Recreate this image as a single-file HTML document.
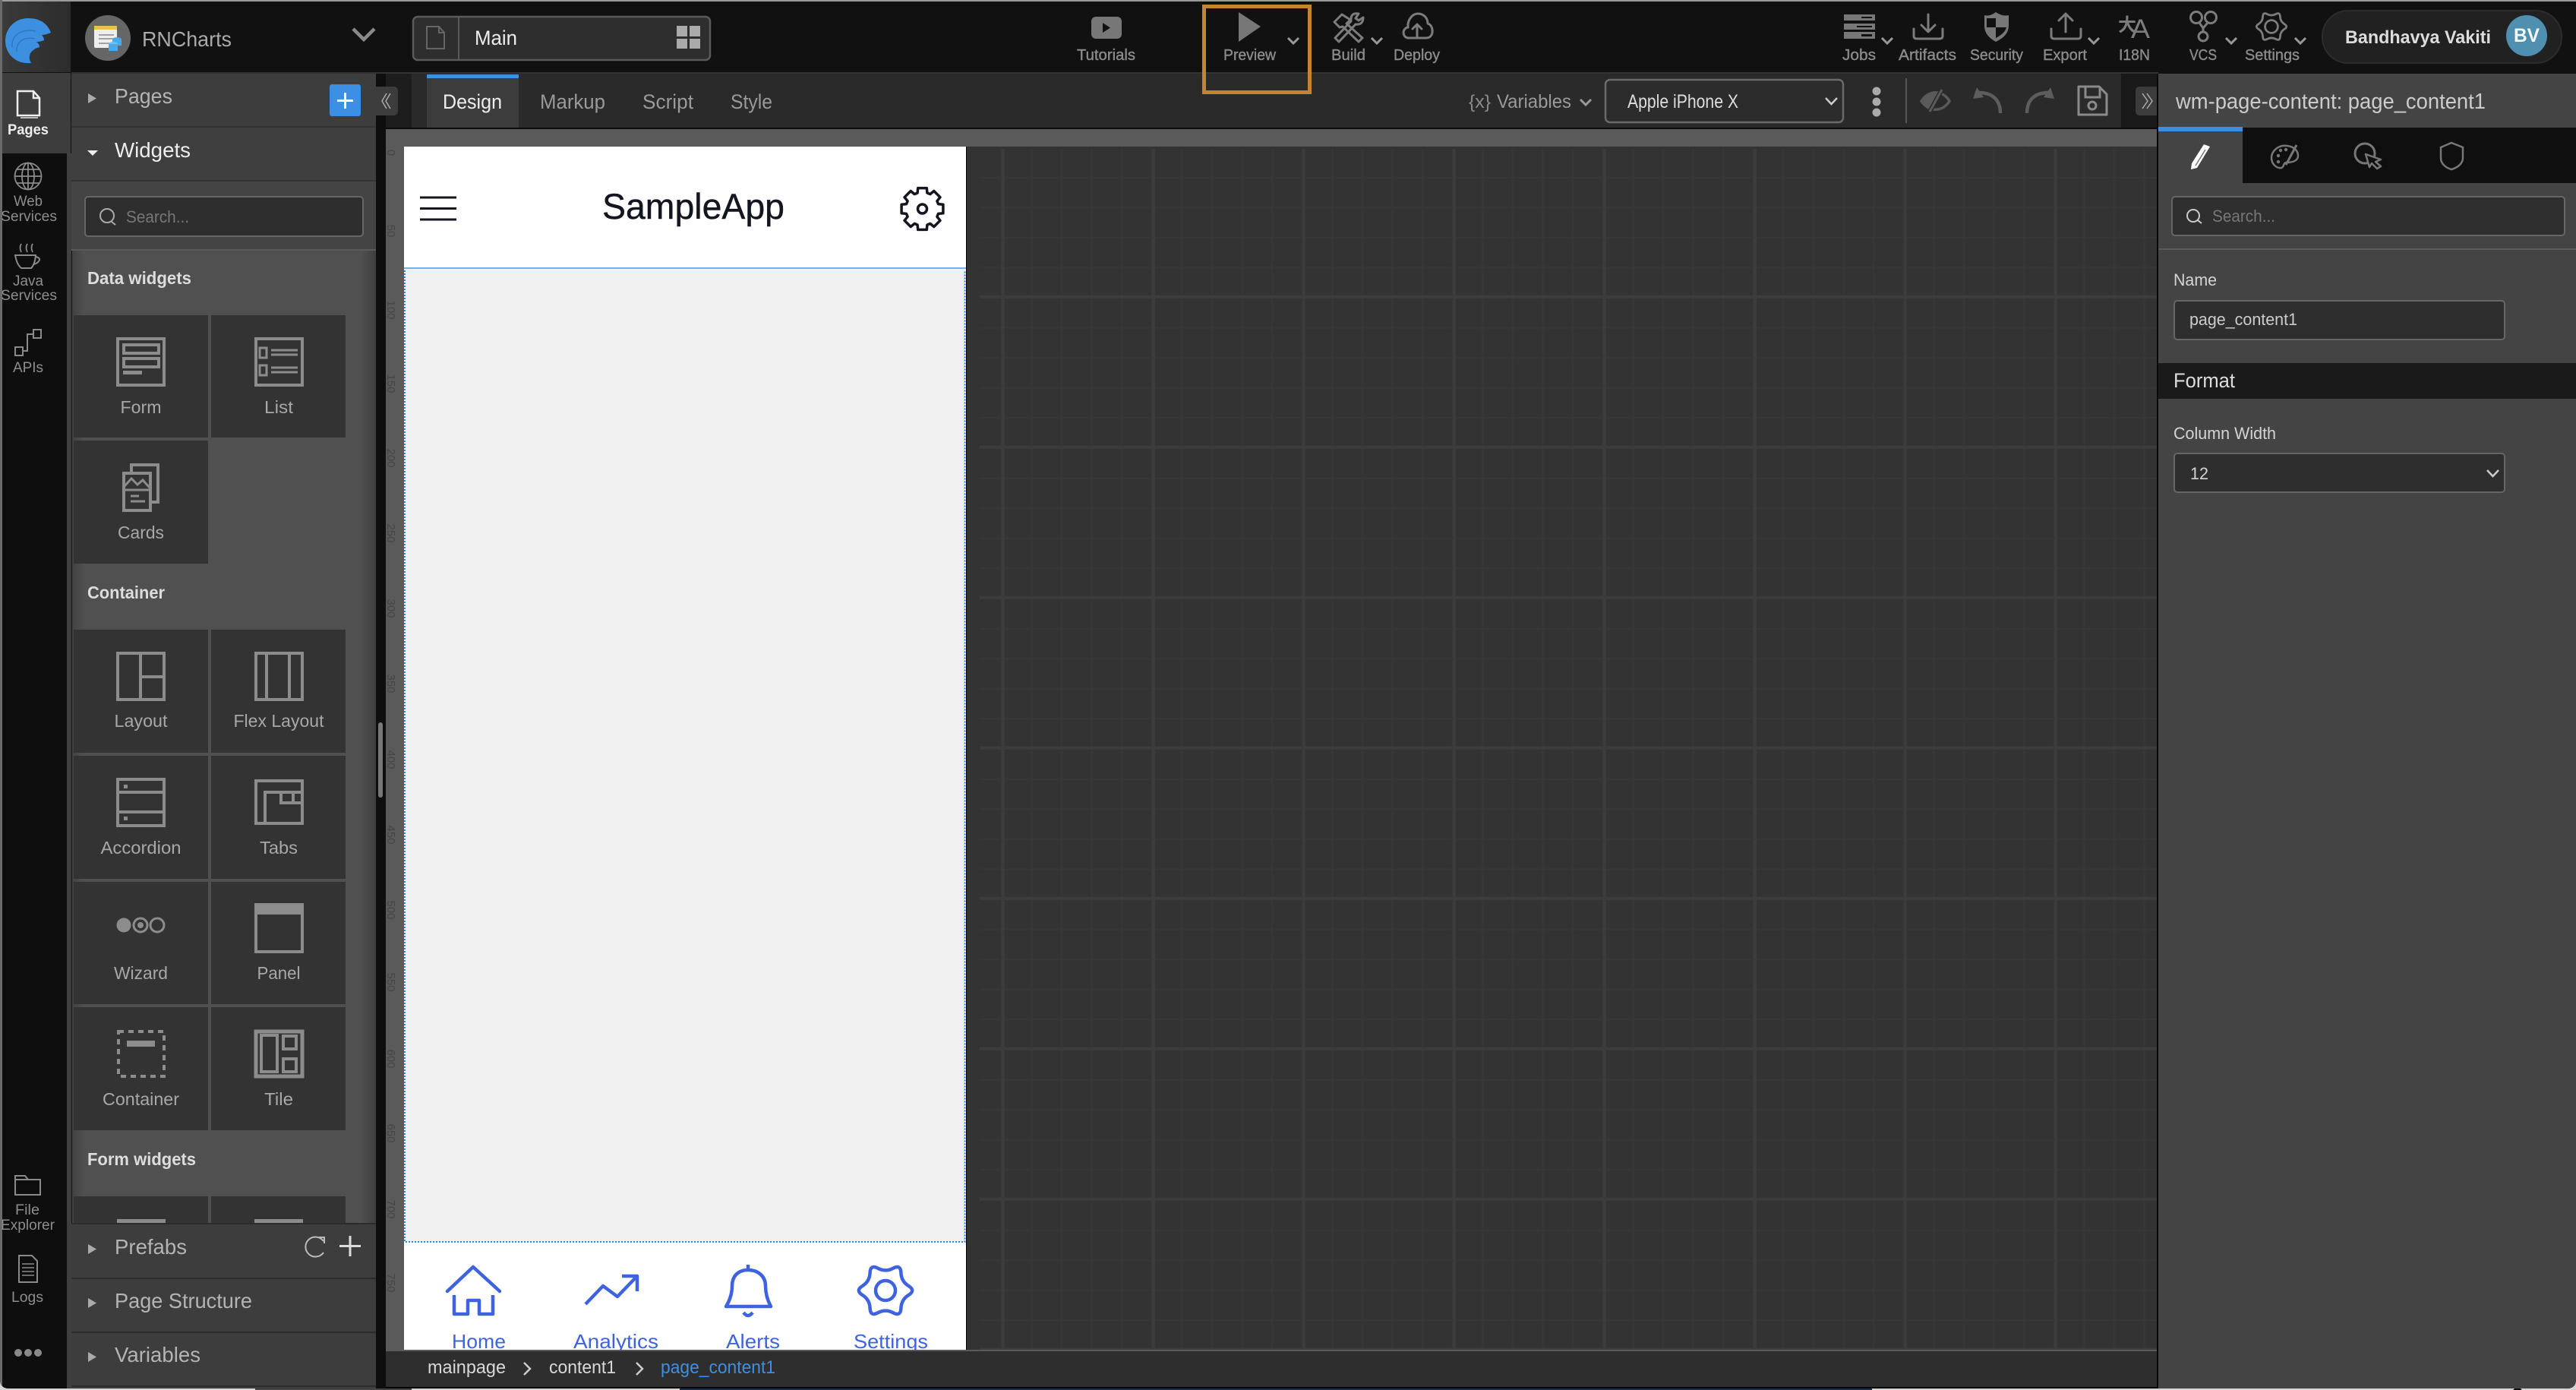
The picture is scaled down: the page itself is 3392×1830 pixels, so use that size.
<!DOCTYPE html>
<html lang="en"><head><meta charset="utf-8"><title>RNCharts - Studio</title>
<style>
html,body{margin:0;padding:0;width:3392px;height:1830px;overflow:hidden;background:#cfcfcf}
svg{display:block}
text{font-family:"Liberation Sans","Noto Sans CJK SC",sans-serif}
.tb{font-size:20px;fill:#8a8a8a;stroke:#8a8a8a;stroke-width:.4px}
.rl{font-size:19px;fill:#8d8d8d}
.tl{font-size:23px;fill:#a8a8a8}
.sec{font-size:23px;fill:#ddd;font-weight:bold}
.hd{font-size:28px;fill:#b4b4b4}
.nav{font-size:26px;fill:#3f63e0}
.rul{font-size:15px;fill:#454545}
.fp{font-size:22px;fill:#d4d4d4}
.ti{fill:none;stroke:#8c8c8c;stroke-width:4}
.tf{fill:#8c8c8c}
.ic{fill:none;stroke:#7c7c7c;stroke-width:3;stroke-linejoin:round;stroke-linecap:round}
.ch{fill:none;stroke:#999;stroke-width:3}
.ni{fill:none;stroke:#3f63e0;stroke-width:4.5;stroke-linejoin:round}
</style></head><body>
<svg xmlns="http://www.w3.org/2000/svg" width="3392" height="1830" viewBox="0 0 3392 1830">
<defs>
<pattern id="gm" patternUnits="userSpaceOnUse" x="1278.1" y="232.6" width="39.6" height="39.6"><path d="M1 0V39.6M0 1H39.6" stroke="#373737" stroke-width="2" fill="none"/></pattern>
<pattern id="gM" patternUnits="userSpaceOnUse" x="1318.7" y="388.7" width="198" height="198"><path d="M2 0V198M0 2H198" stroke="#3c3c3c" stroke-width="4" fill="none"/></pattern>
<linearGradient id="secg" x1="0" x2="1" y1="0" y2="0"><stop offset="0" stop-color="#424242"/><stop offset=".04" stop-color="#505050"/><stop offset=".95" stop-color="#505050"/><stop offset="1" stop-color="#3e3e3e"/></linearGradient>
<linearGradient id="logoc" x1="0" x2="1" y1="0" y2="0"><stop offset="0" stop-color="#3a3a3a"/><stop offset="1" stop-color="#2c2c2c"/></linearGradient>
<clipPath id="phone"><rect x="532" y="193" width="741" height="1584"/></clipPath>
<clipPath id="win"><path d="M0 0H3392V1816Q3392 1828 3380 1828H12Q0 1828 0 1816Z"/></clipPath>
</defs>

<!-- bottom strip behind window -->
<rect width="3392" height="1830" fill="#d4d4d4"/>
<rect x="895" y="1826" width="1570" height="4" fill="#1d2d4e"/>
<rect x="336" y="1828" width="206" height="2" fill="#444"/>
<circle cx="3315" cy="1834" r="7" fill="#111"/>

<g clip-path="url(#win)">
<rect width="3392" height="1830" fill="#111"/>
<rect width="3392" height="2" fill="#9a9a9a"/>

<!-- rail -->
<rect x="0" y="0" width="3" height="1830" fill="#6a6a6a"/>
<rect x="3" y="2" width="90" height="93" fill="url(#logoc)"/>
<rect x="3" y="96" width="85" height="1732" fill="#0e0e0e"/>
<rect x="3" y="96" width="90" height="106" fill="#3d3d3d"/>
<rect x="88" y="202" width="6" height="1626" fill="#3f3f3f"/>
<!-- logo -->
<path d="M37 24C54 24 63 32 67 43Q60 46 55 46Q58 49 58 53Q54 55 48 55Q52 58 52 62Q44 64 40 70Q37 77 41 83C20 85 7 70 7 54C7 37 20 24 37 24Z" fill="#3d8fe0"/>
<path d="M16 62C15 45 28 38 47 41M22 68C22 55 30 48 46 51" fill="none" stroke="#2f78c2" stroke-width="1.5"/>
<!-- project -->
<circle cx="142" cy="50" r="30" fill="#666"/>
<rect x="124" y="34" width="30" height="29" rx="2" fill="#eee"/><rect x="124" y="34" width="30" height="5" fill="#e8c24a"/>
<path d="M130 46H150M130 51H150M130 57H146" stroke="#8a8a8a" stroke-width="1.5"/>
<ellipse cx="154" cy="52" rx="6" ry="3" fill="#4aa9e8"/><rect x="148" y="52" width="12" height="8" fill="#4aa9e8"/>
<ellipse cx="149" cy="58" rx="6" ry="3" fill="#6cc0f4"/><rect x="143" y="58" width="12" height="9" fill="#4aa9e8"/>
<text x="187" y="61" font-size="28" fill="#aaa" textLength="118" lengthAdjust="spacingAndGlyphs">RNCharts</text>
<path d="M465 38L479 52L493 38" fill="none" stroke="#8a8a8a" stroke-width="4.5"/>
<!-- page select -->
<rect x="544" y="22" width="391" height="57" rx="6" fill="#2e2e2e" stroke="#5a5a5a" stroke-width="2.5"/>
<path d="M604 22V79" stroke="#5a5a5a" stroke-width="2"/>
<path d="M562 35H578L585 43V64H562Z M578 35V43H585" fill="none" stroke="#666" stroke-width="2"/>
<text x="625" y="59" font-size="27" fill="#eee" textLength="56" lengthAdjust="spacingAndGlyphs">Main</text>
<path d="M891 34h14v14h-14zM908 34h14v14h-14zM891 51h14v13h-14zM908 51h14v13h-14z" fill="#aaa"/>

<!-- top right tools -->
<rect x="1437" y="22" width="40" height="29" rx="6" fill="#777"/><path d="M1452 30L1462 36.5L1452 43Z" fill="#111"/>
<text class="tb" x="1418" y="79" textLength="77" lengthAdjust="spacingAndGlyphs">Tutorials</text>
<path d="M1631 16L1660 35L1631 55Z" fill="#777"/>
<text class="tb" x="1611" y="79" textLength="69" lengthAdjust="spacingAndGlyphs">Preview</text>
<path class="ch" d="M1696 50L1703 57L1710 50"/>
<path class="ic" d="M1757 29L1767 19L1778 26L1773 31L1794 50L1789 55L1768 35L1764 36Z"/>
<path class="ic" d="M1758 50L1763 55L1785 32Q1795 33 1795 23L1789 27L1785 24L1789 18Q1778 16 1779 28Z"/>
<path class="ch" d="M1806 50L1813 57L1820 50"/>
<text class="tb" x="1753" y="79" textLength="45" lengthAdjust="spacingAndGlyphs">Build</text>
<path class="ic" d="M1855 50C1846 50 1846 37 1854 36C1853 26 1860 18 1867 18C1875 18 1880 24 1880 31C1888 33 1889 50 1878 50Z M1866 50V33M1860 38L1866 32L1872 38"/>
<text class="tb" x="1835" y="79" textLength="61" lengthAdjust="spacingAndGlyphs">Deploy</text>

<path d="M2428 19h41v8h-41zM2428 31h41v8h-41zM2428 42h41v9h-41z" fill="#777"/>
<path d="M2451 22h14v2h-14zM2445 34h20v2h-20zM2451 45h14v3h-14z" fill="#111"/>
<path class="ch" d="M2478 50L2485 57L2492 50"/>
<text class="tb" x="2426" y="79" textLength="44" lengthAdjust="spacingAndGlyphs">Jobs</text>
<path class="ic" d="M2539 19V41M2530 33L2539 42L2548 33M2520 38V47Q2520 51 2524 51H2554Q2558 51 2558 47V38"/>
<text class="tb" x="2500" y="79" textLength="76" lengthAdjust="spacingAndGlyphs">Artifacts</text>
<path d="M2613 20Q2620 22 2628 16Q2637 22 2645 20V34Q2645 47 2628 55Q2613 47 2613 34Z" fill="#777"/>
<path d="M2616 24H2628V36H2616ZM2628 36H2642Q2640 44 2628 50Z" fill="#111"/>
<text class="tb" x="2594" y="79" textLength="70" lengthAdjust="spacingAndGlyphs">Security</text>
<path class="ic" d="M2720 19V42M2711 27L2720 18L2729 27M2701 38V47Q2701 51 2705 51H2736Q2740 51 2740 47V38"/>
<path class="ch" d="M2750 50L2757 57L2764 50"/>
<text class="tb" x="2690" y="79" textLength="58" lengthAdjust="spacingAndGlyphs">Export</text>
<text x="2789" y="41" font-size="24" fill="#7c7c7c" font-weight="bold">大</text>
<text x="2806" y="50" font-size="35" fill="#7c7c7c" textLength="25" lengthAdjust="spacingAndGlyphs">A</text>
<text class="tb" x="2790" y="79" textLength="41" lengthAdjust="spacingAndGlyphs">I18N</text>
<circle class="ic" cx="2892" cy="23" r="7.5"/><circle class="ic" cx="2911" cy="23" r="7.5"/><circle class="ic" cx="2901" cy="48" r="6"/>
<path class="ic" d="M2896 30L2901 37L2907 30M2901 37V42"/>
<path class="ch" d="M2931 50L2938 57L2945 50"/>
<text class="tb" x="2883" y="79" textLength="36" lengthAdjust="spacingAndGlyphs">VCS</text>
<g transform="translate(2991 35) scale(.56)"><path d="M30.4 6Q40 0 30.4 -6Q20.8 -12 20.4 -23.3Q20 -34.6 10 -29.3Q0 -24 -10 -29.3Q-20 -34.6 -20.4 -23.3Q-20.8 -12 -30.4 -6Q-40 0 -30.4 6Q-20.8 12 -20.4 23.3Q-20 34.6 -10 29.3Q0 24 10 29.3Q20 34.6 20.4 23.3Q20.8 12 30.4 6Z" fill="none" stroke="#7c7c7c" stroke-width="5"/><circle r="15" fill="none" stroke="#7c7c7c" stroke-width="5"/></g>
<path class="ch" d="M3022 50L3029 57L3036 50"/>
<text class="tb" x="2956" y="79" textLength="72" lengthAdjust="spacingAndGlyphs">Settings</text>
<rect x="3058" y="14" width="315" height="69" rx="34" fill="#212121" stroke="#2c2c2c" stroke-width="2"/>
<text x="3088" y="57" font-size="24" font-weight="bold" fill="#ddd" textLength="192" lengthAdjust="spacingAndGlyphs">Bandhavya Vakiti</text>
<circle cx="3327" cy="47" r="27" fill="#4f8fb0"/>
<text x="3310" y="55" font-size="25" font-weight="bold" fill="#f4f8fa" textLength="34" lengthAdjust="spacingAndGlyphs">BV</text>

<!-- second row / tabs -->
<rect x="94" y="95" width="2748" height="2" fill="#333"/>
<rect x="495" y="97" width="13" height="1731" fill="#0e0e0e"/>
<rect x="508" y="97" width="2285" height="71" fill="#2a2a2a"/>
<rect x="508" y="97" width="34" height="71" fill="#1d1d1d"/>
<rect x="2793" y="97" width="49" height="71" fill="#191919"/>
<rect x="562" y="103" width="121" height="65" fill="#3c3c3c"/><rect x="562" y="98" width="121" height="5" fill="#3d8fe0"/>
<text x="583" y="143" font-size="27" fill="#eee" textLength="78" lengthAdjust="spacingAndGlyphs">Design</text>
<text x="711" y="143" font-size="27" fill="#9a9a9a" textLength="86" lengthAdjust="spacingAndGlyphs">Markup</text>
<text x="846" y="143" font-size="27" fill="#9a9a9a" textLength="67" lengthAdjust="spacingAndGlyphs">Script</text>
<text x="962" y="143" font-size="27" fill="#9a9a9a" textLength="55" lengthAdjust="spacingAndGlyphs">Style</text>
<path d="M495 114H518Q524 114 524 120V146Q524 152 518 152H495Z" fill="#3c3c3c"/>
<path d="M509 123L503 133L509 143M514 123L508 133L514 143" fill="none" stroke="#aaa" stroke-width="1.5"/>

<text x="1934" y="142" font-size="24" fill="#8a8a8a" textLength="29" lengthAdjust="spacingAndGlyphs">{x}</text>
<text x="1971" y="142" font-size="25" fill="#9a9a9a" textLength="98" lengthAdjust="spacingAndGlyphs">Variables</text>
<path class="ch" d="M2081 131L2088 138L2095 131"/>
<rect x="2114" y="105" width="313" height="56" rx="6" fill="#2c2c2c" stroke="#6a6a6a" stroke-width="2.5"/>
<text x="2143" y="142" font-size="25" fill="#ddd" textLength="146" lengthAdjust="spacingAndGlyphs">Apple iPhone X</text>
<path d="M2404 129L2411.5 137L2419 129" fill="none" stroke="#ccc" stroke-width="2.5"/>
<circle cx="2471" cy="120" r="5.5" fill="#aaa"/><circle cx="2471" cy="134" r="5.5" fill="#aaa"/><circle cx="2471" cy="148" r="5.5" fill="#aaa"/>
<rect x="2509" y="103" width="2" height="59" fill="#555"/>
<path d="M2530 133C2540 118 2558 118 2567 133C2558 148 2540 148 2530 133Z" fill="none" stroke="#5a5a5a" stroke-width="3.5"/>
<path d="M2530 133C2536 124 2544 121 2552 121L2541 145C2537 143 2533 138 2530 133Z" fill="#5a5a5a"/>
<path d="M2557 118L2541 147" stroke="#2a2a2a" stroke-width="6"/>
<path d="M2557 118L2541 147" stroke="#5a5a5a" stroke-width="3"/>
<path d="M2634 149C2634 132 2624 122 2606 122" fill="none" stroke="#5d5d5d" stroke-width="4.5"/>
<path d="M2603 115L2598 130L2612 128Z" fill="#5d5d5d"/>
<path d="M2669 149C2669 132 2679 122 2697 122" fill="none" stroke="#5d5d5d" stroke-width="4.5"/>
<path d="M2700 115L2705 130L2691 128Z" fill="#5d5d5d"/>
<path d="M2737 114H2764L2774 124V151H2737Z" fill="none" stroke="#8a8a8a" stroke-width="3" stroke-linejoin="round"/>
<path d="M2746 114V128H2765V114" fill="none" stroke="#8a8a8a" stroke-width="3"/>
<circle cx="2755" cy="139" r="5" fill="none" stroke="#8a8a8a" stroke-width="3"/>
<path d="M2842 114H2818Q2812 114 2812 120V146Q2812 152 2818 152H2842Z" fill="#3c3c3c"/>
<path d="M2821 123L2828 133L2821 143M2827 123L2834 133L2827 143" fill="none" stroke="#aaa" stroke-width="1.5"/>

<!-- canvas -->
<rect x="508" y="168" width="2334" height="2" fill="#0a0a0a"/>
<rect x="508" y="170" width="2332" height="23" fill="#5a5a5a"/>
<rect x="508" y="170" width="24" height="1608" fill="#5a5a5a"/>
<rect x="1273" y="193" width="1567" height="1585" fill="#333"/>
<rect x="1290" y="196" width="1550" height="1582" fill="url(#gm)"/>
<rect x="1290" y="196" width="1550" height="1582" fill="url(#gM)"/>
<rect x="2840" y="97" width="2" height="1731" fill="#0a0a0a"/>
<g>
<text class="rul" text-anchor="middle" transform="translate(510 201) rotate(90)">0</text>
<text class="rul" text-anchor="middle" transform="translate(510 304) rotate(90)">50</text>
<text class="rul" text-anchor="middle" transform="translate(510 408) rotate(90)">100</text>
<text class="rul" text-anchor="middle" transform="translate(510 505) rotate(90)">150</text>
<text class="rul" text-anchor="middle" transform="translate(510 603) rotate(90)">200</text>
<text class="rul" text-anchor="middle" transform="translate(510 702) rotate(90)">250</text>
<text class="rul" text-anchor="middle" transform="translate(510 801) rotate(90)">300</text>
<text class="rul" text-anchor="middle" transform="translate(510 900) rotate(90)">350</text>
<text class="rul" text-anchor="middle" transform="translate(510 1000) rotate(90)">400</text>
<text class="rul" text-anchor="middle" transform="translate(510 1099) rotate(90)">450</text>
<text class="rul" text-anchor="middle" transform="translate(510 1198) rotate(90)">500</text>
<text class="rul" text-anchor="middle" transform="translate(510 1293) rotate(90)">550</text>
<text class="rul" text-anchor="middle" transform="translate(510 1394) rotate(90)">600</text>
<text class="rul" text-anchor="middle" transform="translate(510 1492) rotate(90)">650</text>
<text class="rul" text-anchor="middle" transform="translate(510 1592) rotate(90)">700</text>
<text class="rul" text-anchor="middle" transform="translate(510 1689) rotate(90)">750</text>
</g>

<!-- phone -->
<g clip-path="url(#phone)">
<rect x="532" y="193" width="741" height="1584" fill="#fff"/>
<rect x="532" y="354" width="740" height="1281" fill="#f0f0f0"/>
<rect x="532" y="352" width="740" height="2" fill="#6fb2ee"/>
<path d="M533 356V1635H1270.5V356" fill="none" stroke="#2a86e2" stroke-width="2" stroke-dasharray="2 2"/>
<rect x="1272" y="193" width="1" height="1584" fill="#000"/>
<path d="M553 260H601M553 274.5H601M553 289H601" stroke="#15151f" stroke-width="3"/>
<text x="793" y="288" font-size="47" fill="#15151f" stroke="#15151f" stroke-width=".4" textLength="240" lengthAdjust="spacingAndGlyphs">SampleApp</text>
<g transform="translate(1214.5 275)"><path d="M-6.4 -21L-5.8 -27.4L5.8 -27.4L6.4 -21L10.3 -19.4L15.3 -23.5L23.5 -15.3L19.4 -10.3L21 -6.4L27.4 -5.8L27.4 5.8L21 6.4L19.4 10.3L23.5 15.3L15.3 23.5L10.3 19.4L6.4 21L5.8 27.4L-5.8 27.4L-6.4 21L-10.3 19.4L-15.3 23.5L-23.5 15.3L-19.4 10.3L-21 6.4L-27.4 5.8L-27.4 -5.8L-21 -6.4L-19.4 -10.3L-23.5 -15.3L-15.3 -23.5L-10.3 -19.4Z" fill="none" stroke="#15151f" stroke-width="3.5" stroke-linejoin="round"/><circle r="6" fill="none" stroke="#15151f" stroke-width="3.5"/></g>
<!-- nav -->
<path class="ni" d="M589 1700L623 1668L658 1700" stroke-linecap="round"/>
<path class="ni" d="M598 1705V1730H616V1712H631V1730H649V1705"/>
<path class="ni" d="M771 1717L794 1693L813 1707L839 1680M819 1680H839V1700"/>
<path class="ni" d="M956 1720Q964 1707 964 1693C964 1680 972 1672 985 1672C998 1672 1008 1680 1008 1693Q1008 1707 1015 1720ZM985 1672V1665M979 1728Q985 1736 991 1728"/>
<g transform="translate(1166 1699)"><path class="ni" d="M30.4 6Q40 0 30.4 -6Q20.8 -12 20.4 -23.3Q20 -34.6 10 -29.3Q0 -24 -10 -29.3Q-20 -34.6 -20.4 -23.3Q-20.8 -12 -30.4 -6Q-40 0 -30.4 6Q-20.8 12 -20.4 23.3Q-20 34.6 -10 29.3Q0 24 10 29.3Q20 34.6 20.4 23.3Q20.8 12 30.4 6Z"/><circle class="ni" r="13"/></g>
<text class="nav" x="595" y="1775" textLength="71" lengthAdjust="spacingAndGlyphs">Home</text>
<text class="nav" x="755" y="1775" textLength="112" lengthAdjust="spacingAndGlyphs">Analytics</text>
<text class="nav" x="956" y="1775" textLength="71" lengthAdjust="spacingAndGlyphs">Alerts</text>
<text class="nav" x="1124" y="1775" textLength="98" lengthAdjust="spacingAndGlyphs">Settings</text>
</g>
<!-- breadcrumb -->
<rect x="508" y="1777" width="2332" height="2" fill="#5a5a5a"/>
<rect x="508" y="1779" width="2332" height="47" fill="#2e2e2e"/>
<rect x="508" y="1826" width="2334" height="2" fill="#050505"/>
<text x="563" y="1808" font-size="24" fill="#d8d8d8" textLength="103" lengthAdjust="spacingAndGlyphs">mainpage</text>
<path d="M690 1794L698 1802L690 1810" fill="none" stroke="#ccc" stroke-width="2.5"/>
<text x="723" y="1808" font-size="24" fill="#d8d8d8" textLength="88" lengthAdjust="spacingAndGlyphs">content1</text>
<path d="M838 1794L846 1802L838 1810" fill="none" stroke="#ccc" stroke-width="2.5"/>
<text x="870" y="1808" font-size="24" fill="#3f8ee0" textLength="151" lengthAdjust="spacingAndGlyphs">page_content1</text>

<!-- left panel -->
<rect x="94" y="97" width="401" height="70" fill="#3d3d3d"/><rect x="94" y="166" width="401" height="2" fill="#333"/>
<rect x="94" y="168" width="401" height="70" fill="#3f3f3f"/><rect x="94" y="237" width="401" height="2" fill="#333"/>
<rect x="94" y="239" width="401" height="89" fill="#444"/><rect x="94" y="328" width="401" height="2" fill="#5a5a5a"/>
<path d="M116 123L127 129.5L116 136Z" fill="#aaa"/>
<text class="hd" x="151" y="136" textLength="76" lengthAdjust="spacingAndGlyphs">Pages</text>
<rect x="434" y="111" width="41" height="42" rx="3" fill="#3d8fe3"/>
<path d="M454.5 122V143M444 132.5H465" stroke="#fff" stroke-width="3"/>
<path d="M115 198H129L122 205Z" fill="#eee"/>
<text class="hd" style="fill:#eee" x="151" y="207" textLength="100" lengthAdjust="spacingAndGlyphs">Widgets</text>
<rect x="112" y="259" width="366" height="52" rx="4" fill="#2e2e2e" stroke="#666" stroke-width="2"/>
<circle cx="141" cy="284" r="9" fill="none" stroke="#aaa" stroke-width="2"/><path d="M147 292L152 296" stroke="#aaa" stroke-width="2"/>
<text x="166" y="293" font-size="22" fill="#777" textLength="83" lengthAdjust="spacingAndGlyphs">Search...</text>

<rect x="95" y="330" width="400" height="1281" fill="url(#secg)"/>
<text class="sec" x="115" y="374" textLength="137" lengthAdjust="spacingAndGlyphs">Data widgets</text>
<text class="sec" x="115" y="788" textLength="102" lengthAdjust="spacingAndGlyphs">Container</text>
<text class="sec" x="115" y="1534" textLength="143" lengthAdjust="spacingAndGlyphs">Form widgets</text>
<g fill="#333">
<rect x="97" y="415" width="177" height="161"/><rect x="278" y="415" width="177" height="161"/>
<rect x="97" y="580" width="177" height="162"/>
<rect x="97" y="829" width="177" height="162"/><rect x="278" y="829" width="177" height="162"/>
<rect x="97" y="995" width="177" height="162"/><rect x="278" y="995" width="177" height="162"/>
<rect x="97" y="1161" width="177" height="161"/><rect x="278" y="1161" width="177" height="161"/>
<rect x="97" y="1326" width="177" height="162"/><rect x="278" y="1326" width="177" height="162"/>
<rect x="97" y="1575" width="177" height="36"/><rect x="278" y="1575" width="177" height="36"/>
</g>
<g text-anchor="middle">
<text class="tl" x="185.5" y="544" textLength="54" lengthAdjust="spacingAndGlyphs">Form</text>
<text class="tl" x="367" y="544" textLength="38" lengthAdjust="spacingAndGlyphs">List</text>
<text class="tl" x="185.5" y="709" textLength="61" lengthAdjust="spacingAndGlyphs">Cards</text>
<text class="tl" x="185.5" y="957" textLength="70" lengthAdjust="spacingAndGlyphs">Layout</text>
<text class="tl" x="367" y="957" textLength="119" lengthAdjust="spacingAndGlyphs">Flex Layout</text>
<text class="tl" x="185.5" y="1124" textLength="106" lengthAdjust="spacingAndGlyphs">Accordion</text>
<text class="tl" x="367" y="1124" textLength="50" lengthAdjust="spacingAndGlyphs">Tabs</text>
<text class="tl" x="185.5" y="1289" textLength="71" lengthAdjust="spacingAndGlyphs">Wizard</text>
<text class="tl" x="367" y="1289" textLength="57" lengthAdjust="spacingAndGlyphs">Panel</text>
<text class="tl" x="185.5" y="1455" textLength="101" lengthAdjust="spacingAndGlyphs">Container</text>
<text class="tl" x="367" y="1455" textLength="38" lengthAdjust="spacingAndGlyphs">Tile</text>
</g>
<!-- Tile icons -->
<rect class="ti" x="155" y="446" width="61" height="61"/><rect class="ti" x="163" y="454" width="46" height="11"/><rect class="ti" x="163" y="472" width="46" height="11"/><rect class="tf" x="162" y="488" width="25" height="5"/>
<rect class="ti" x="337" y="446" width="61" height="61"/><rect class="ti" style="stroke-width:3" x="342" y="458" width="9" height="13"/><rect class="ti" style="stroke-width:3" x="342" y="481" width="9" height="13"/><path class="ti" style="stroke-width:3" d="M357 461H392M357 467H392M357 484H392M357 490H392"/>
<path class="ti" d="M173 622V612H208V661H198"/><rect class="ti" x="163" y="623" width="35" height="49"/><path class="ti" style="stroke-width:3" d="M163 645H198M164 640L173 630L181 638L188 632L197 642M172 653H183M172 660H191"/>
<rect class="ti" x="155" y="860" width="61" height="61"/><path class="ti" d="M185 860V921M185 891H216"/>
<rect class="ti" x="337" y="860" width="61" height="61"/><path class="ti" d="M351 860V921M381 860V921"/>
<rect class="ti" x="155" y="1026" width="61" height="61"/><path class="ti" d="M155 1043H216M155 1069H216"/><rect class="tf" x="163" y="1033" width="5" height="5"/><rect class="tf" x="163" y="1075" width="5" height="5"/>
<rect class="ti" x="337" y="1028" width="61" height="56"/><path class="ti" d="M349 1084V1043H398M370 1043V1057H398M386 1043V1057"/>
<circle class="tf" cx="163" cy="1218" r="9.5"/><circle class="ti" style="stroke-width:3" cx="185" cy="1218" r="9"/><circle class="tf" cx="185" cy="1218" r="4"/><circle class="ti" style="stroke-width:3" cx="207" cy="1218" r="9"/>
<rect class="ti" x="337" y="1191" width="61" height="62"/><rect class="tf" x="335" y="1190" width="64" height="14"/>
<rect class="ti" x="156" y="1358" width="60" height="59" stroke-dasharray="7 6"/><rect class="tf" x="167" y="1370" width="37" height="8"/>
<rect class="ti" style="stroke-width:5" x="337" y="1358" width="61" height="59"/><rect class="ti" x="344" y="1363" width="21" height="48"/><rect class="ti" x="373" y="1364" width="17" height="17"/><rect class="ti" x="373" y="1394" width="17" height="17"/>
<rect class="tf" x="154" y="1605" width="64" height="6"/><rect class="tf" x="335" y="1605" width="64" height="6"/>
<rect x="498" y="951" width="6" height="99" rx="3" fill="#777"/>

<!-- bottom sections -->
<rect x="94" y="1611" width="401" height="217" fill="#3d3d3d"/>
<path d="M94 1611H495M94 1683H495M94 1754H495M94 1825H495" stroke="#2c2c2c" stroke-width="2"/>
<path d="M116 1638L127 1644.5L116 1651Z M116 1709L127 1715.5L116 1722Z M116 1780L127 1786.5L116 1793Z" fill="#aaa"/>
<text class="hd" x="151" y="1651" textLength="95" lengthAdjust="spacingAndGlyphs">Prefabs</text>
<text class="hd" x="151" y="1722" textLength="181" lengthAdjust="spacingAndGlyphs">Page Structure</text>
<text class="hd" x="151" y="1793" textLength="113" lengthAdjust="spacingAndGlyphs">Variables</text>
<path d="M426 1634A13 13 0 1 0 426 1649" fill="none" stroke="#bbb" stroke-width="2"/><path d="M420 1629H427V1637" fill="none" stroke="#bbb" stroke-width="2"/>
<path d="M461 1627V1654M447 1640.5H475" stroke="#ddd" stroke-width="3"/>

<!-- rail icons and labels -->
<path d="M23 120H44L52 129V152H23Z M44 120V129H52" fill="none" stroke="#eee" stroke-width="2.5"/><path d="M27 155H50" stroke="#bbb" stroke-width="2"/>
<text x="10" y="177" font-size="19" font-weight="bold" fill="#eee" textLength="54" lengthAdjust="spacingAndGlyphs">Pages</text>
<g fill="none" stroke="#8a8a8a" stroke-width="1.8"><circle cx="37" cy="232" r="17.5"/><ellipse cx="37" cy="232" rx="8" ry="17.5"/><path d="M37 214V250M20 232H55M22 223H52M22 241H52"/></g>
<text class="rl" x="18" y="271" textLength="38" lengthAdjust="spacingAndGlyphs">Web</text>
<text class="rl" x="1" y="291" textLength="74" lengthAdjust="spacingAndGlyphs">Services</text>
<path d="M28 321Q25 326 28 332M36 321Q33 326 36 332M43 321Q40 326 43 332" fill="none" stroke="#8a8a8a" stroke-width="1.8"/>
<path d="M20 336H47Q46 348 41 353H28Q22 348 20 336ZM47 338Q56 340 49 346L45 348" fill="none" stroke="#8a8a8a" stroke-width="2"/>
<text class="rl" x="17" y="376" textLength="40" lengthAdjust="spacingAndGlyphs">Java</text>
<text class="rl" x="1" y="395" textLength="74" lengthAdjust="spacingAndGlyphs">Services</text>
<g fill="none" stroke="#8a8a8a" stroke-width="2"><rect x="44" y="434" width="10" height="11"/><rect x="20" y="457" width="10" height="11"/><path d="M30 462H36V440H44"/></g>
<text class="rl" x="17" y="490" textLength="40" lengthAdjust="spacingAndGlyphs">APIs</text>
<path d="M20 1548H33L37 1553H53V1573H20Z M20 1553H37" fill="none" stroke="#8a8a8a" stroke-width="2"/>
<text class="rl" x="20" y="1599" textLength="32" lengthAdjust="spacingAndGlyphs">File</text>
<text class="rl" x="1" y="1619" textLength="71" lengthAdjust="spacingAndGlyphs">Explorer</text>
<path d="M25 1653H42L49 1660V1688H25Z" fill="none" stroke="#8a8a8a" stroke-width="2"/><path d="M29 1664H45M29 1669H45M29 1674H45M29 1679H45" stroke="#8a8a8a" stroke-width="1.5"/>
<text class="rl" x="15" y="1714" textLength="42" lengthAdjust="spacingAndGlyphs">Logs</text>
<circle cx="24" cy="1781" r="5" fill="#888"/><circle cx="37" cy="1781" r="5" fill="#888"/><circle cx="50" cy="1781" r="5" fill="#888"/>

<!-- right panel -->
<rect x="2842" y="97" width="550" height="1731" fill="#444"/>
<text x="2865" y="143" font-size="29" fill="#ccc" textLength="408" lengthAdjust="spacingAndGlyphs">wm-page-content: page_content1</text>
<rect x="2953" y="168" width="439" height="73" fill="#0f0f0f"/>
<rect x="2842" y="167" width="111" height="6" fill="#3d8fe0"/>
<path d="M2902 190L2910 193L2893 221L2885 223L2886 215Z" fill="#fff"/><path d="M2904 197L2891 218" stroke="#777" stroke-width="1.5"/>
<path d="M3012 192C3000 190 2991 199 2991 208C2991 216 2998 222 3004 221C3008 220 3006 215 3010 214C3018 214 3026 212 3026 205C3026 198 3020 193 3012 192Z" fill="none" stroke="#777" stroke-width="2.5"/>
<circle cx="3000" cy="205" r="2.2" fill="#777"/><circle cx="3003" cy="198" r="2.2" fill="#777"/><circle cx="3010" cy="197" r="2.2" fill="#777"/><circle cx="3000" cy="213" r="2.2" fill="#777"/>
<path d="M3024 191L3010 217" stroke="#777" stroke-width="3"/>
<circle cx="3114" cy="202" r="13" fill="none" stroke="#777" stroke-width="3"/>
<path d="M3115 203L3135 210L3128 213L3135 219L3130 222L3123 215L3120 220Z" fill="#0f0f0f" stroke="#777" stroke-width="2.5" stroke-linejoin="round"/>
<path d="M3228 188L3243 194V208C3243 216 3235 221 3228 223C3221 221 3214 216 3214 208V194Z" fill="none" stroke="#777" stroke-width="2.5"/>
<rect x="2860" y="259" width="517" height="51" rx="4" fill="#2f2f2f" stroke="#666" stroke-width="2"/>
<circle cx="2888" cy="284" r="8" fill="none" stroke="#ccc" stroke-width="2"/><path d="M2894 290L2899 294" stroke="#ccc" stroke-width="2"/>
<text x="2913" y="292" font-size="22" fill="#777" textLength="83" lengthAdjust="spacingAndGlyphs">Search...</text>
<rect x="2842" y="327" width="550" height="2" fill="#5c5c5c"/>
<text class="fp" x="2862" y="376" textLength="57" lengthAdjust="spacingAndGlyphs">Name</text>
<rect x="2863" y="396" width="435" height="51" rx="4" fill="#2e2e2e" stroke="#666" stroke-width="2"/>
<text class="fp" style="fill:#ccc" x="2883" y="428" textLength="142" lengthAdjust="spacingAndGlyphs">page_content1</text>
<rect x="2842" y="478" width="550" height="47" fill="#1a1a1a"/>
<text x="2862" y="510" font-size="27" fill="#ddd" textLength="81" lengthAdjust="spacingAndGlyphs">Format</text>
<text class="fp" x="2862" y="578" textLength="135" lengthAdjust="spacingAndGlyphs">Column Width</text>
<rect x="2863" y="597" width="435" height="51" rx="4" fill="#2e2e2e" stroke="#666" stroke-width="2"/>
<text class="fp" x="2884" y="631" textLength="24" lengthAdjust="spacingAndGlyphs">12</text>
<path d="M3275 619L3282.5 627L3290 619" fill="none" stroke="#ccc" stroke-width="2.5"/>

<!-- Preview highlight -->
<rect x="1585.5" y="8.5" width="139" height="113" fill="none" stroke="#c5852f" stroke-width="5"/>
</g>
</svg>
</body></html>
